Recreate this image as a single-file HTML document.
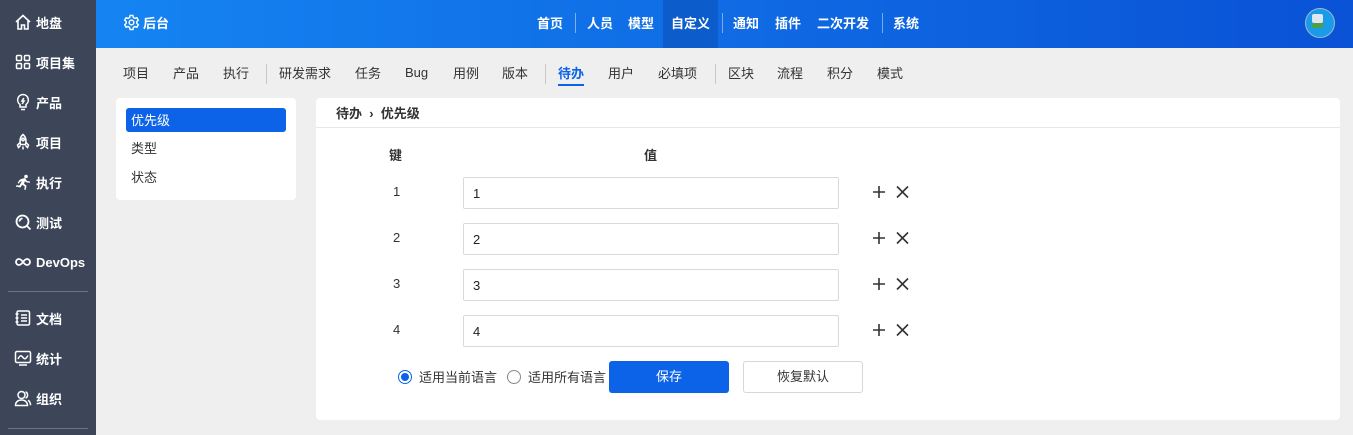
<!DOCTYPE html><html><head><meta charset="utf-8"><style>
*{margin:0;padding:0;box-sizing:border-box}
body{width:1353px;height:435px;overflow:hidden;background:#efefef;font-family:"Liberation Sans","Noto Sans CJK SC",sans-serif;font-size:13px;color:#333;position:relative}
.a{position:absolute;white-space:nowrap}
#side{left:0;top:0;width:96px;height:435px;background:#3d4659}
.si{left:14px;color:#fff;font-size:13px;font-weight:bold;display:flex;align-items:center;gap:4px;height:20px}
.si svg{width:18px;height:18px}
.hr{left:8px;width:80px;height:1px;background:#6b7485}
#top{left:96px;top:0;width:1257px;height:48px;background:linear-gradient(90deg,#1584f2,#0a52d6)}
.tn{top:13px;color:#fff;font-size:13px;font-weight:bold}
.vs{width:1px;height:20px;background:rgba(255,255,255,.45);top:13px}
.sn{top:63px;color:#333;font-size:13px}
.gs{width:1px;height:20px;background:#c8c8c8;top:64px}
.card{background:#fff;border-radius:4px}
.inp{left:463px;width:376px;height:32px;border:1px solid #d9d9d9;border-radius:2px;background:#fff;padding:8px 9px;font-size:13px;color:#222}
.k{left:393px;font-size:13px;color:#333}
</style></head><body>
<div class="a" id="side"></div>
<div class="a si" style="top:12px"><svg viewBox="0 0 18 18" fill="none" stroke="#fff" stroke-width="1.6"><path d="M2 9L9 2.5 16 9M4 7.5V16h3.5v-4h3v4H14V7.5"/></svg>地盘</div>
<div class="a si" style="top:52px"><svg viewBox="0 0 18 18" fill="none" stroke="#fff" stroke-width="1.5"><rect x="2.5" y="2.5" width="5" height="5" rx="1"/><rect x="10.5" y="2.5" width="5" height="5" rx="1"/><rect x="2.5" y="10.5" width="5" height="5" rx="1"/><rect x="10.5" y="10.5" width="5" height="5" rx="1"/></svg>项目集</div>
<div class="a si" style="top:92px"><svg viewBox="0 0 18 18" fill="none" stroke="#fff" stroke-width="1.5"><path d="M9 1.5a5.5 5.5 0 0 0-3 10V14h6v-2.5a5.5 5.5 0 0 0-3-10zM7 16.5h4M9.8 5L8 8h2l-1.8 3"/></svg>产品</div>
<div class="a si" style="top:132px"><svg viewBox="0 0 18 18" fill="none" stroke="#fff" stroke-width="1.5"><path d="M9 1.5c3 2.5 3.5 6 2.5 10h-5C5.5 7.5 6 4 9 1.5zM6.5 9l-3 3 1 2.5 2-2M11.5 9l3 3-1 2.5-2-2M9 13.5v3"/><circle cx="9" cy="6.5" r="1.2"/></svg>项目</div>
<div class="a si" style="top:172px"><svg viewBox="0 0 18 18" fill="#fff"><circle cx="12" cy="3.5" r="1.8"/><path d="M7 6l4-1 2 3 3 .5-.3 1.4-3.7-.6-1-1.3-1 2.7 2.5 2-.8 4h-1.5l.6-3.2-2.6-1.8-1.8 2.8L2 13.6l.2-1.4 3.3.3 2.3-4.3-1.7.4-1.3 2-1.2-.6L5.5 7z"/></svg>执行</div>
<div class="a si" style="top:212px"><svg viewBox="0 0 18 18" fill="none" stroke="#fff" stroke-width="1.8"><circle cx="8.5" cy="8.5" r="6"/><path d="M13 13l3.5 3.5M5.5 8.5a3 3 0 0 1 3-3"/></svg>测试</div>
<div class="a si" style="top:252px"><svg viewBox="0 0 18 18" fill="none" stroke="#fff" stroke-width="1.8"><path d="M9 9c-1.5-2-2.5-3-4-3a3 3 0 0 0 0 6c1.5 0 2.5-1 4-3 1.5-2 2.5-3 4-3a3 3 0 0 1 0 6c-1.5 0-2.5-1-4-3z"/></svg>DevOps</div>
<div class="a hr" style="top:291px"></div>
<div class="a si" style="top:308px"><svg viewBox="0 0 18 18" fill="none" stroke="#fff" stroke-width="1.5"><rect x="3" y="2" width="12.5" height="14" rx="1.5"/><path d="M7 6h6M7 9h6M7 12h6M1.5 5h3M1.5 9h3M1.5 13h3"/></svg>文档</div>
<div class="a si" style="top:348px"><svg viewBox="0 0 18 18" fill="none" stroke="#fff" stroke-width="1.5"><rect x="1.5" y="2.5" width="15" height="11" rx="1.5"/><path d="M4 10c2-4 3-4 5-1.5s3 1 5-2M5 16h8"/></svg>统计</div>
<div class="a si" style="top:388px"><svg viewBox="0 0 18 18" fill="none" stroke="#fff" stroke-width="1.5"><circle cx="7.5" cy="6" r="3.5"/><path d="M1.5 16.5c0-3.5 2.5-5.5 6-5.5s6 2 6 5.5zM11.5 2.8a3.5 3.5 0 0 1 0 6.4M14 11.3c1.7.8 2.5 2.5 2.5 5"/></svg>组织</div>
<div class="a hr" style="top:428px"></div>

<div class="a" id="top"></div>
<div class="a" style="left:123px;top:13px;color:#fff;font-size:13px;font-weight:bold;display:flex;align-items:center;gap:3px"><svg width="17" height="17" viewBox="0 0 18 18" fill="none" stroke="#fff" stroke-width="1.5"><path d="M7.5 1.5h3l.5 2.2 1.6.9 2.1-.7 1.5 2.6-1.6 1.5v1.9l1.6 1.5-1.5 2.6-2.1-.7-1.6.9-.5 2.3h-3l-.5-2.3-1.6-.9-2.1.7L1.8 11.4 3.4 9.9V8L1.8 6.5l1.5-2.6 2.1.7L7 3.7z"/><circle cx="9" cy="9" r="2.5"/></svg>后台</div>
<div class="a" style="left:663px;top:0;width:55px;height:48px;background:#0d5ccc"></div>
<div class="a tn" style="left:537px">首页</div>
<div class="a vs" style="left:575px"></div>
<div class="a tn" style="left:587px">人员</div>
<div class="a tn" style="left:628px">模型</div>
<div class="a tn" style="left:671px">自定义</div>
<div class="a vs" style="left:722px"></div>
<div class="a tn" style="left:733px">通知</div>
<div class="a tn" style="left:775px">插件</div>
<div class="a tn" style="left:817px">二次开发</div>
<div class="a vs" style="left:882px"></div>
<div class="a tn" style="left:893px">系统</div>
<div class="a" style="left:1305px;top:8px;width:30px;height:30px;border-radius:50%;background:#1a9be8;border:1px solid #9bb8d8;overflow:hidden"><div style="position:absolute;left:6px;top:5px;width:11px;height:9px;background:#dfe6f0;border-radius:2px"></div><div style="position:absolute;left:5px;top:14px;width:13px;height:5px;background:#4aa04a;border-radius:6px 2px"></div></div>

<div class="a sn" style="left:123px">项目</div>
<div class="a sn" style="left:173px">产品</div>
<div class="a sn" style="left:223px">执行</div>
<div class="a gs" style="left:266px"></div>
<div class="a sn" style="left:279px">研发需求</div>
<div class="a sn" style="left:355px">任务</div>
<div class="a sn" style="left:405px;top:65px">Bug</div>
<div class="a sn" style="left:453px">用例</div>
<div class="a sn" style="left:502px">版本</div>
<div class="a gs" style="left:545px"></div>
<div class="a sn" style="left:558px;color:#0d63e8;font-weight:bold">待办</div>
<div class="a" style="left:558px;top:84px;width:26px;height:2px;background:#0d63e8"></div>
<div class="a sn" style="left:608px">用户</div>
<div class="a sn" style="left:658px">必填项</div>
<div class="a gs" style="left:715px"></div>
<div class="a sn" style="left:728px">区块</div>
<div class="a sn" style="left:777px">流程</div>
<div class="a sn" style="left:827px">积分</div>
<div class="a sn" style="left:877px">模式</div>

<div class="a card" style="left:116px;top:98px;width:180px;height:102px"></div>
<div class="a" style="left:126px;top:108px;width:160px;height:24px;background:#0d63e8;border-radius:3px;color:#fff;padding:2px 5px;font-size:13px">优先级</div>
<div class="a" style="left:131px;top:138px">类型</div>
<div class="a" style="left:131px;top:167px">状态</div>

<div class="a card" style="left:316px;top:98px;width:1024px;height:322px"></div>
<div class="a" style="left:316px;top:127px;width:1024px;height:1px;background:#e8e8e8"></div>
<div class="a" style="left:336px;top:103px;font-weight:bold;color:#333">待办 &nbsp;›&nbsp; 优先级</div>
<div class="a" style="left:389px;top:145px;font-weight:bold">键</div>
<div class="a" style="left:644px;top:145px;font-weight:bold">值</div>

<div class="a k" style="top:184px">1</div><div class="a inp" style="top:177px">1</div>
<div class="a k" style="top:230px">2</div><div class="a inp" style="top:223px">2</div>
<div class="a k" style="top:276px">3</div><div class="a inp" style="top:269px">3</div>
<div class="a k" style="top:322px">4</div><div class="a inp" style="top:315px">4</div>

<svg class="a" style="left:870px;top:184px" width="45" height="154" viewBox="0 0 45 154" stroke="#333" stroke-width="1.6" fill="none">
<g id="r"><path d="M3 8h12M9 2v12M27 2.5l11 11M38 2.5l-11 11"/></g>
<use href="#r" y="46"/><use href="#r" y="92"/><use href="#r" y="138"/>
</svg>

<div class="a" style="left:398px;top:370px;width:14px;height:14px;border-radius:50%;border:1px solid #0d63e8;background:#fff"><div style="margin:2px;width:8px;height:8px;border-radius:50%;background:#0d63e8"></div></div>
<div class="a" style="left:419px;top:367px">适用当前语言</div>
<div class="a" style="left:507px;top:370px;width:14px;height:14px;border-radius:50%;border:1px solid #888;background:#fff"></div>
<div class="a" style="left:528px;top:367px">适用所有语言</div>
<div class="a" style="left:609px;top:361px;width:120px;height:32px;background:#0d63e8;border-radius:3px;color:#fff;text-align:center;line-height:32px">保存</div>
<div class="a" style="left:743px;top:361px;width:120px;height:32px;background:#fff;border:1px solid #d6d6dc;border-radius:3px;text-align:center;line-height:30px">恢复默认</div>
</body></html>
